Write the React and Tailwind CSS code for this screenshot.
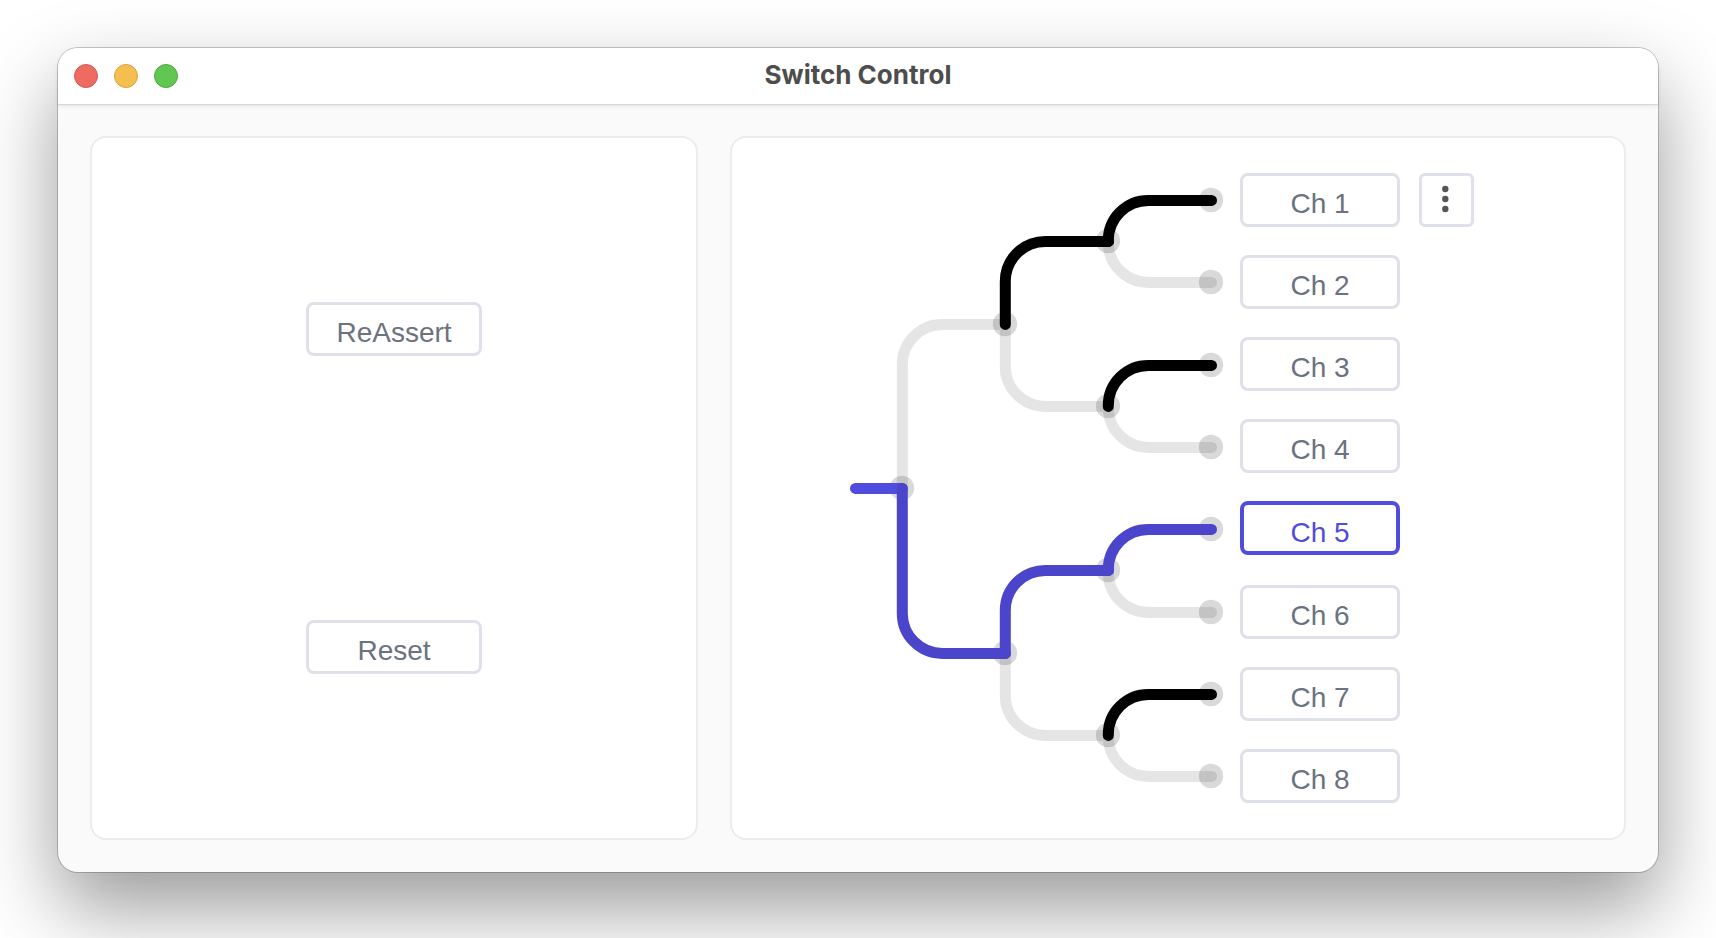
const OFF = '#e5e5e5'
const CLOSED = '#000000'
const ACTIVE = '#4b45cb'
const RADIUS = 40

const COLUMNS = [902, 1005, 1108, 1211]

const ROWS = [
  [488],
  [324, 653],
  [241, 406, 570, 735],
  [200, 282, 365, 447, 529, 612, 694, 776],
]

// One entry for each branch, level by level and from top to bottom.
const BRANCHES = [
  ['off', 'active'],
  ['closed', 'off', 'active', 'off'],
  ['closed', 'off', 'closed', 'off', 'active', 'off', 'closed', 'off'],
]

const STROKES = { off: OFF, closed: CLOSED, active: ACTIVE }

const CHANNELS = ['Ch 1', 'Ch 2', 'Ch 3', 'Ch 4', 'Ch 5', 'Ch 6', 'Ch 7', 'Ch 8']
const SELECTED = 'Ch 5'

const branches = BRANCHES.flatMap((states, level) =>
  states.map((state, index) => {
    const x = COLUMNS[level] + 0.3
    const from = ROWS[level][Math.floor(index / 2)] + 0.4
    const to = ROWS[level + 1][index] + 0.4
    const up = to < from
    const bendY = up ? to + RADIUS : to - RADIUS
    return {
      key: `${level}-${index}`,
      state,
      d: `M${x} ${from}V${bendY}A${RADIUS} ${RADIUS} 0 0 ${up ? 1 : 0} ${x + RADIUS} ${to}H${COLUMNS[level + 1] + 0.5}`,
    }
  }),
)

const nodes = ROWS.flatMap((ys, level) => ys.map((y) => ({ x: COLUMNS[level], y })))

function SwitchTree() {
  return (
    <svg
      className="mr-4 h-[600px] w-[374px] shrink-0 overflow-visible"
      viewBox="850 188 374 600"
      fill="none"
      strokeWidth="11"
      strokeLinecap="round"
      aria-hidden="true"
    >
      {branches
        .filter((b) => b.state === 'off')
        .map((b) => (
          <path key={b.key} d={b.d} stroke={OFF} />
        ))}
      {nodes.map((n) => (
        <circle key={`${n.x}-${n.y}`} cx={n.x} cy={n.y} r="12.2" fill="#000" fillOpacity="0.15" />
      ))}
      <path d="M855.5 488.4H902.3" stroke="#504ce0" />
      {branches
        .filter((b) => b.state !== 'off')
        .map((b) => (
          <path key={b.key} d={b.d} stroke={STROKES[b.state]} />
        ))}
    </svg>
  )
}

function Button({ children, selected = false, className = '' }) {
  const look = selected ? 'border-4 border-[#504ce0] text-[#504ce0]' : 'border-3 border-[#dee1e9] text-[#6b7280]'
  return (
    <button
      type="button"
      aria-pressed={selected}
      className={`h-[54px] rounded-lg bg-white pt-2 text-[28px] leading-10 ${look} ${className}`}
    >
      {children}
    </button>
  )
}

function MenuButton() {
  return (
    <button
      type="button"
      aria-label="Channel options"
      className="ml-[19px] flex h-[54px] w-[55px] items-center justify-center rounded-md border-3 border-[#dee1e9] bg-white"
    >
      <svg className="h-8 w-8" viewBox="0 0 32 32" fill="#555555" aria-hidden="true">
        <circle cx="14.3" cy="5" r="3.2" />
        <circle cx="14.3" cy="15" r="3.2" />
        <circle cx="14.3" cy="25" r="3.2" />
      </svg>
    </button>
  )
}

function TitleBar() {
  return (
    <header className="relative z-10 grid h-14 grid-cols-[1fr_auto_1fr] items-center rounded-t-[20px] bg-white px-4 shadow-[0_1px_0_#d6d6d6,0_2px_4px_rgba(0,0,0,0.1)]">
      <div className="flex gap-4">
        <button type="button" aria-label="Close" className="h-6 w-6 rounded-full border border-[#d5584f] bg-[#ed6b60]" />
        <button type="button" aria-label="Minimize" className="h-6 w-6 rounded-full border border-[#d8a243] bg-[#f5bf4f]" />
        <button type="button" aria-label="Zoom" className="h-6 w-6 rounded-full border border-[#50a73d] bg-[#62c655]" />
      </div>
      <h1 className="pb-0.5 font-[Inter,sans-serif] text-[26px] leading-8 font-bold text-[#4d4d4d]">Switch Control</h1>
    </header>
  )
}

export default function App() {
  return (
    <div className="min-h-screen overflow-hidden bg-white px-[58px] pt-12 pb-[66px] font-['Liberation_Sans',Arial,sans-serif]">
      <div className="rounded-[20px] bg-[#fafafa] shadow-[0_0_0_1px_rgba(0,0,0,0.2),0_36px_80px_rgba(0,0,0,0.4)]">
        <TitleBar />
        <main className="grid grid-cols-[19fr_28fr] gap-8 p-8">
          <section className="flex flex-col items-center justify-around rounded-2xl border-2 border-[#ececec] bg-white p-8">
            <Button className="w-44">ReAssert</Button>
            <Button className="w-44">Reset</Button>
          </section>
          <section className="flex items-center justify-center rounded-2xl border-2 border-[#ececec] bg-white py-[35px] pr-8">
            <SwitchTree />
            <ul className="flex flex-col gap-7">
              {CHANNELS.map((name) => (
                <li key={name} className={name === SELECTED ? 'flex pb-0.5' : 'flex'}>
                  <Button className="w-40" selected={name === SELECTED}>
                    {name}
                  </Button>
                  {name === 'Ch 1' && <MenuButton />}
                </li>
              ))}
            </ul>
          </section>
        </main>
      </div>
    </div>
  )
}
